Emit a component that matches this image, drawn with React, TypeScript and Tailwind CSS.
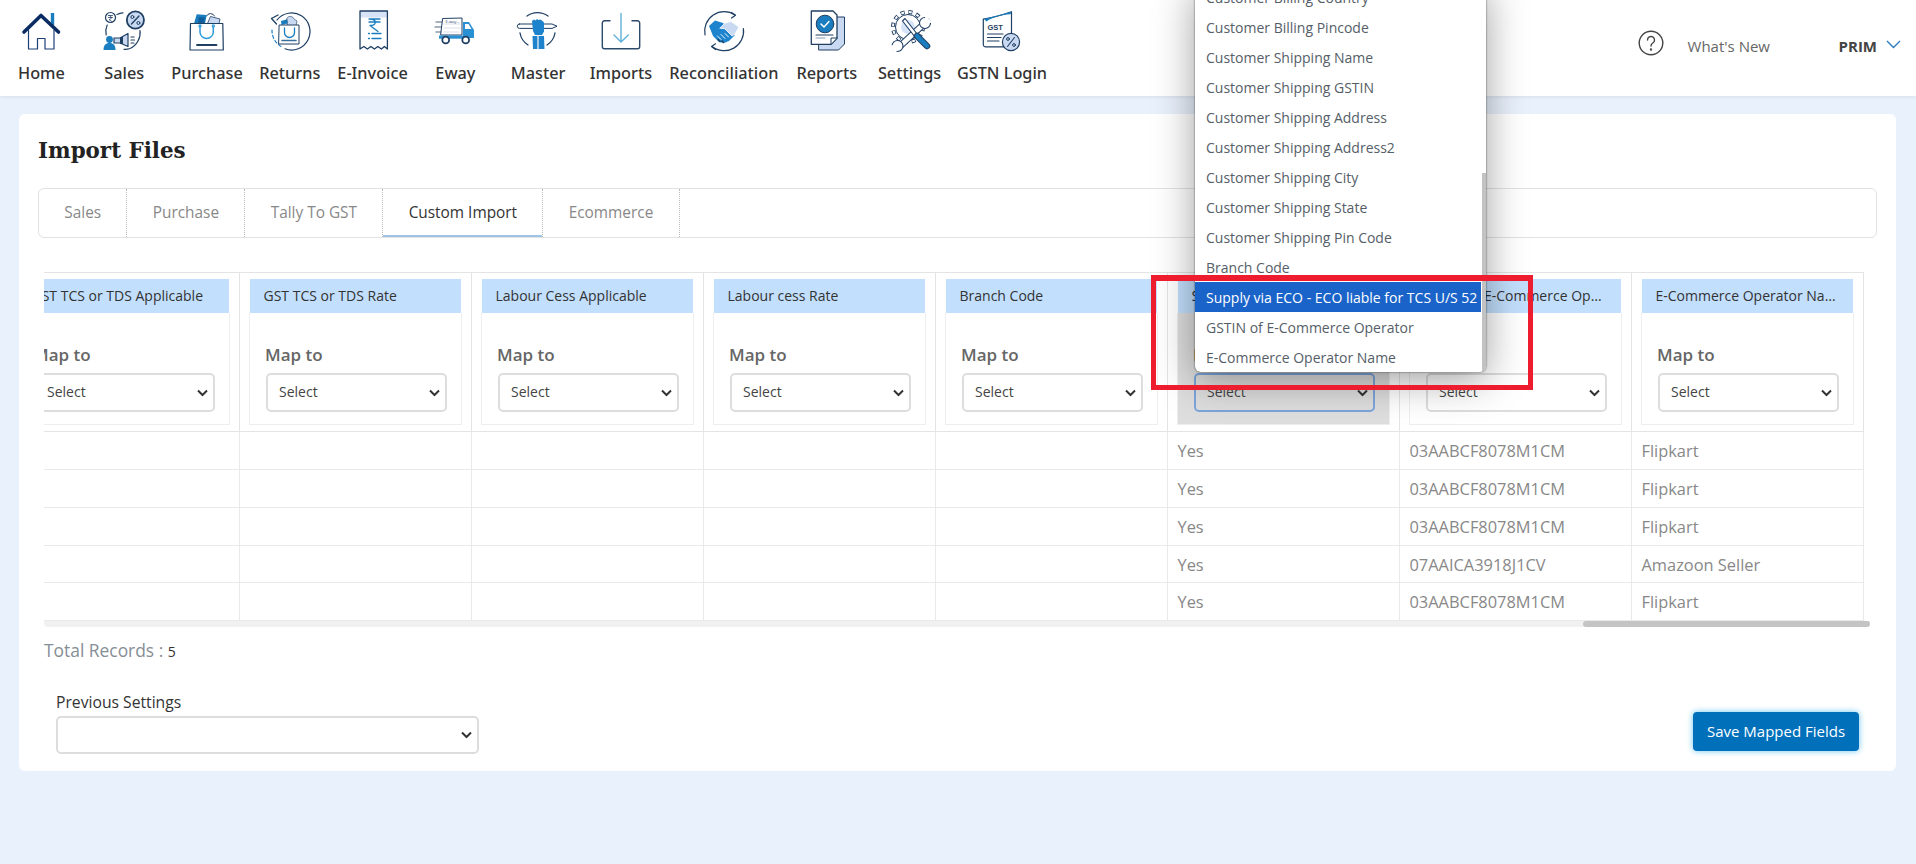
import type { ReactNode } from "react";

const NAVY = "#1f3f63";
const BLUE = "#1a7dc0";
const PALE = "#c9d9f1";

const Icon = ({ children }: { children: ReactNode }) => (
  <svg viewBox="0 0 44 44" className="h-11 w-11" fill="none" stroke={NAVY} strokeWidth="1.2" strokeLinecap="round" strokeLinejoin="round">
    {children}
  </svg>
);

const HomeIcon = () => (
  <Icon>
    <rect x="31.8" y="4" width="3.4" height="12" fill={BLUE} stroke="none" />
    <path d="M9.5 21V40H18.5V29.5H26V40H35V21" stroke="#1d3f78" />
    <path d="M5 23L22 6.5L39.5 23" stroke="#0a2c62" strokeWidth="3.6" />
  </Icon>
);

const SalesIcon = () => (
  <Icon>
    <circle cx="8.5" cy="8.5" r="5" />
    <path d="M6.5 6.500h4M6.500 8.500h4M7 6.500c3 0 3 4 0 4l3 2.200" strokeWidth="0.8" />
    <circle cx="33.400" cy="11" r="8.600" fill={PALE} strokeWidth="1.800" />
    <path d="M29.500 15l7.500-8" strokeWidth="1.300" />
    <circle cx="30.400" cy="8" r="1.500" strokeWidth="1" />
    <circle cx="36.400" cy="14" r="1.500" strokeWidth="1" />
    <path d="M15 5.500c2-1 4-1.500 6-1.600M5.200 16c-1.600 3.500-1.800 6.500-1 10M38 21.500c1 7-3 15-10 18-2 .7-4 1-6 .8" strokeWidth="1.200" />
    <circle cx="7.500" cy="30.500" r="3.400" fill={BLUE} stroke="none" />
    <path d="M1.500 41c0-4.500 2-7 6-7s6 2.500 6 7z" fill={BLUE} stroke="none" />
    <path d="M12 29h6l8-4.500v13l-8-3.500h-6z" fill={PALE} />
    <rect x="18" y="28" width="3" height="7" fill={NAVY} stroke="none" />
    <path d="M29 28h3M29 31h3.500M29 34h3" strokeWidth="1.200" />
  </Icon>
);

const PurchaseIcon = () => (
  <Icon>
    <path d="M21.500 7a4.500 4.500 0 0 1 8 0" strokeWidth="1" />
    <path d="M9 14.500l2.700-9.200 10 .7-1.700 8.500z" fill={BLUE} stroke="none" />
    <path d="M14 8l6 .5-1 6h-6z" fill="#0f5f9c" stroke="none" />
    <path d="M22.500 14.500l3-7L35 10l-1 4.500z" fill={PALE} strokeWidth="0.8" />
    <path d="M5.500 14.500H37.800L38.300 41H5z" fill="white" />
    <path d="M15 18v5.500a6.700 6.700 0 0 0 13.300 0V18" stroke="#2c9bdc" strokeWidth="1.500" />
    <circle cx="15" cy="17" r="1.100" stroke="#2c9bdc" />
    <circle cx="28.300" cy="17" r="1.100" stroke="#2c9bdc" />
    <path d="M12 36h19.500" strokeWidth="1.800" />
  </Icon>
);

const ReturnsIcon = () => (
  <Icon>
    <path d="M9 11A18.500 18.500 0 1 1 17 39.800" />
    <path d="M4 21A18.500 18.500 0 0 0 14 38" stroke={BLUE} strokeDasharray="3 2.500" />
    <path d="M3.500 9.500L10 6M3.500 9.500L8.500 15" strokeWidth="1.300" />
    <path d="M13 12l7-2 1.500 4-8 2z" fill={BLUE} stroke="none" />
    <path d="M19 9a4 4 0 0 1 7 1l3 2-1 5h-8z" fill={PALE} stroke={NAVY} strokeWidth="0.6" />
    <path d="M11.500 16H31V35H11z" fill="white" strokeWidth="1" />
    <path d="M16.500 19v4.500a5 5 0 0 0 10 0V19" stroke={BLUE} strokeWidth="1.300" />
    <path d="M14 31.500H28" strokeWidth="1.600" stroke="#3b6f9c" />
  </Icon>
);

const InvoiceIcon = () => (
  <Icon>
    <rect x="9" y="2" width="27.400" height="6.500" fill="#d7e4f8" stroke="none" />
    <path d="M9 40V2H36.400V40l-3-2.500-3 2.500-3.500-2.500-3.500 2.500-3.500-2.500-3.500 2.500-3.500-2.500z" strokeWidth="1.300" />
    <path d="M18 10h11M18 13h11M19 10c7 0 7 6.500 0 6.500l8 6" stroke={BLUE} strokeWidth="1.300" />
    <path d="M17.500 24.500h1M21 24.500h9M17.500 29.500h1M21 29.500h9" stroke={BLUE} strokeWidth="1.300" />
  </Icon>
);

const EwayIcon = () => (
  <Icon>
    <path d="M3 13h6M2 18h6M3 23h5" strokeWidth="1.400" stroke="#8a99aa" />
    <path d="M10 9.500l19-.5v17H8z" fill="white" strokeWidth="1" />
    <path d="M11 15h16M11 19h16M11 23h15" stroke="#d9e2ee" />
    <text x="12.500" y="14" fontSize="4" fill={NAVY} stroke="none" fontFamily="Open Sans, sans-serif">E-way...</text>
    <path d="M30 13h6l5 8v8H30z" fill="#2a90d4" stroke="none" />
    <path d="M32 15h3.500l3 5H32z" fill="white" stroke="none" />
    <rect x="6" y="26.500" width="26" height="3.200" fill="#2a90d4" stroke="none" />
    <circle cx="12.700" cy="31" r="3.400" fill="white" strokeWidth="1.800" />
    <circle cx="32.700" cy="31" r="3.400" fill="white" strokeWidth="1.800" />
  </Icon>
);

const MasterIcon = () => (
  <Icon>
    <path d="M11 7a18 18 0 0 1 21 0M4 24a18 18 0 0 0 8 12M39 24a18 18 0 0 1-8 12" strokeWidth="1.300" />
    <path d="M3.500 15H36l5 2.200-5 2.200H3.500a2 2 0 0 1 0-4.400z" fill="white" strokeWidth="1" />
    <path d="M16 12l2-1.500 1.500 1 1.500-1.500 1.500 1 1.500-.5 2 1 2 2v9l-2 3.500h-7l-2-4z" fill="#1d83cc" stroke="none" />
    <path d="M16.500 27H28l.5 13H17z" fill="#1d83cc" stroke="none" />
    <path d="M22 27V40" stroke="#cfdff2" strokeWidth="1.500" />
  </Icon>
);

const ImportsIcon = () => (
  <Icon>
    <path d="M11 11.800H5.500a2.200 2.200 0 0 0-2.200 2.200V37.500a2.200 2.200 0 0 0 2.200 2.200H38.500a2.200 2.200 0 0 0 2.200-2.200V14a2.200 2.200 0 0 0-2.200-2.200H33" strokeWidth="1.400" stroke="#2c4a6a" />
    <path d="M22 4.500V33M15 26l7 7 7.300-7" stroke="#5fb1d8" strokeWidth="1.400" />
  </Icon>
);

const ReconIcon = () => (
  <Icon>
    <path d="M3 26A19.500 19.500 0 0 1 33 6" strokeWidth="1.200" />
    <path d="M41.400 19.500A19.500 19.500 0 0 1 10 37.500" strokeWidth="1.200" />
    <path d="M29.500 3.500L33.500 6.200 29.500 9M13.500 34.800L9.500 37.500 13.500 40.500" strokeWidth="1.200" />
    <path d="M7 17L13 11.500 21 14 33 26 30 29 27 32 22 34 17 33 11 27z" fill="#1d83cc" stroke="none" />
    <path d="M18 19L23 14 29 12.500 37 18 33 25 30 27 23 20z" fill={PALE} stroke="white" strokeWidth="0.800" />
    <path d="M15.500 27l3.500 3.500M19 25.500l4 4M23 24.500l3.500 3.500" stroke="white" strokeWidth="0.900" />
    <path d="M16 30.500l2 2M20 32l1.500 1.500" stroke={NAVY} strokeWidth="1.500" />
  </Icon>
);

const ReportsIcon = () => (
  <Icon>
    <path d="M14 8h25.500v27l-6 6H14z" fill={PALE} strokeWidth="1" />
    <path d="M6.300 2H28l4 4v23l-6 6.300H6.300z" fill="white" strokeWidth="1.300" />
    <path d="M26 35.300V29h6z" fill="white" strokeWidth="1" />
    <circle cx="20" cy="15" r="8.800" fill={BLUE} stroke={NAVY} strokeWidth="1" />
    <path d="M16 15l3 3 5-5.500" stroke="white" strokeWidth="1.500" />
    <path d="M11 26h17" strokeWidth="1.200" />
    <path d="M11 29h9" strokeWidth="1" stroke="#8a99aa" />
  </Icon>
);

const SettingsIcon = () => (
  <Icon>
    <circle cx="20" cy="18" r="15" stroke={NAVY} strokeWidth="4" strokeDasharray="4 3.850" strokeLinecap="butt" />
    <circle cx="20" cy="18" r="15" stroke="white" strokeWidth="2" strokeDasharray="2.800 5.050" strokeDashoffset="-0.600" strokeLinecap="butt" />
    <circle cx="20" cy="18" r="12.500" fill="white" stroke={NAVY} strokeWidth="1" />
    <circle cx="20" cy="18" r="7" fill="#d7e4f8" stroke="none" />
    <path d="M11 38L37 14" stroke={NAVY} strokeWidth="7" strokeLinecap="butt" />
    <path d="M11 38L37 14" stroke="white" strokeWidth="5" strokeLinecap="butt" />
    <circle cx="37" cy="14" r="5.500" fill="white" strokeWidth="1.100" />
    <circle cx="9.500" cy="37" r="5.500" fill="white" strokeWidth="1.100" />
    <path d="M38 7.500L37 14l6-1z" fill="white" stroke="white" strokeWidth="1.500" />
    <path d="M2 37l7.500 0 -2 6z" fill="white" stroke="white" strokeWidth="1.500" />
    <path d="M14.500 12l2.500-2.500 12.500 16-2.500 2.500z" fill="white" strokeWidth="1.100" />
    <path d="M29 27L39 37" stroke={NAVY} strokeWidth="6.500" />
    <path d="M29 27L39 37" stroke={BLUE} strokeWidth="4.500" />
  </Icon>
);

const GstnIcon = () => (
  <Icon>
    <path d="M3.300 36V10C12 9 22 6 31.500 2.700V26L27 37.800H5.500a2.200 2.200 0 0 1-2.200-1.800z" fill="white" strokeWidth="1.200" />
    <path d="M4 10l27.500-7.300-1 2.500C22 6 13 7.500 6.500 12.500z" fill={BLUE} stroke="none" />
    <text x="7.500" y="21" fontSize="7.500" fontWeight="700" fill={NAVY} stroke="none" fontFamily="Liberation Sans, sans-serif">GST</text>
    <path d="M7.500 25H23M7.500 28.500H21M7.500 32H19" strokeWidth="1.200" />
    <circle cx="31" cy="33" r="8.600" fill={PALE} strokeWidth="1.200" />
    <path d="M27.500 37.500l7-9" strokeWidth="1.100" />
    <circle cx="28" cy="30" r="1.400" strokeWidth="1" />
    <circle cx="34" cy="36" r="1.400" strokeWidth="1" />
  </Icon>
);

const navItems = [
  { label: "Home", icon: <HomeIcon />, w: "w-[82.8px]" },
  { label: "Sales", icon: <SalesIcon />, w: "w-[82.8px]" },
  { label: "Purchase", icon: <PurchaseIcon />, w: "w-[82.8px]" },
  { label: "Returns", icon: <ReturnsIcon />, w: "w-[82.8px]" },
  { label: "E-Invoice", icon: <InvoiceIcon />, w: "w-[82.8px]" },
  { label: "Eway", icon: <EwayIcon />, w: "w-[82.8px]" },
  { label: "Master", icon: <MasterIcon />, w: "w-[82.8px]" },
  { label: "Imports", icon: <ImportsIcon />, w: "w-[82.8px]" },
  { label: "Reconciliation", icon: <ReconIcon />, w: "w-[123px]" },
  { label: "Reports", icon: <ReportsIcon />, w: "w-[82.8px]" },
  { label: "Settings", icon: <SettingsIcon />, w: "w-[82.8px]" },
  { label: "GSTN Login", icon: <GstnIcon />, w: "w-[102px]" },
];

const tabs = ["Sales", "Purchase", "Tally To GST", "Custom Import", "Ecommerce"];

const columns = [
  "GST TCS or TDS Applicable",
  "GST TCS or TDS Rate",
  "Labour Cess Applicable",
  "Labour cess Rate",
  "Branch Code",
  "Supply via ECO - ECO liable for TCS U/S 52",
  "GSTIN of E-Commerce Operator",
  "E-Commerce Operator Name",
];

const rows = [
  { gstin: "03AABCF8078M1CM", name: "Flipkart", h: "h-[38px]" },
  { gstin: "03AABCF8078M1CM", name: "Flipkart", h: "h-[38px]" },
  { gstin: "03AABCF8078M1CM", name: "Flipkart", h: "h-[38px]" },
  { gstin: "07AAICA3918J1CV", name: "Amazoon Seller", h: "h-[37px]" },
  { gstin: "03AABCF8078M1CM", name: "Flipkart", h: "h-[38px]" },
];

const options = [
  "Customer Billing Country",
  "Customer Billing Pincode",
  "Customer Shipping Name",
  "Customer Shipping GSTIN",
  "Customer Shipping Address",
  "Customer Shipping Address2",
  "Customer Shipping City",
  "Customer Shipping State",
  "Customer Shipping Pin Code",
  "Branch Code",
  "Supply via ECO - ECO liable for TCS U/S 52",
  "GSTIN of E-Commerce Operator",
  "E-Commerce Operator Name",
];

const SelectBox = ({ className, label }: { className: string; label?: string }) => (
  <div className="relative">
    <select
      defaultValue={label}
      className={`block appearance-none rounded-[5px] border-2 pl-[11px] text-[14px] text-[#444] ${className}`}
    >
      {label ? <option>{label}</option> : null}
    </select>
    <svg viewBox="0 0 11 7" className="pointer-events-none absolute top-1/2 right-[7px] h-[7px] w-[11px] -translate-y-1/2" fill="none" stroke="#333" strokeWidth="2">
      <path d="M1 1l4.500 4.500L10 1" />
    </svg>
  </div>
);

const ColumnHead = ({ title, open }: { title: string; open: boolean }) => (
  <th className="w-[232px] border-t border-r border-b border-[#e4e4e4] px-[9px] pt-[6px] pb-[6px] text-left font-normal">
    <div className="mx-px flex h-[34px] items-center bg-[#c2dffd] pr-[17px] pb-[2px] pl-[13.5px] text-[14px] font-medium text-[#333]">
      <span className="truncate">{title}</span>
    </div>
    <div className={`h-[112px] border-x border-b border-[#eeeeee] pt-[30px] pl-4 ${open ? "bg-[#dedede]" : ""}`}>
      <div className="-ml-px w-[181px] text-[17px] leading-6 font-semibold text-[#666]">Map to</div>
      <div className="mt-[6px] w-[181px]">
        <SelectBox
          label="Select"
          className={`h-[39px] w-[181px] pb-[2px] ${open ? "border-[#7ba6dc] bg-transparent" : "border-[#dddddd] bg-white"}`}
        />
      </div>
    </div>
  </th>
);

export default function App() {
  return (
    <div className="relative flex h-[864px] flex-col overflow-hidden bg-[#e9f1fc] font-['Open_Sans',sans-serif]">
      <header className="flex h-24 shrink-0 bg-white pt-[9px] shadow-[0_1px_4px_rgba(0,0,0,0.08)]">
        <nav className="flex">
          {navItems.map((item) => (
            <div key={item.label} className={`flex flex-col items-center ${item.w}`}>
              {item.icon}
              <span className="mt-[9px] font-['Noto_Sans',sans-serif] text-[16.3px] leading-[22px] font-medium whitespace-nowrap text-[#333]">
                {item.label}
              </span>
            </div>
          ))}
        </nav>
        <div className="ml-auto flex items-start pt-[21px] pr-[15px]">
          <svg viewBox="0 0 26 26" className="h-[26px] w-[26px]" fill="none" stroke="#444" strokeWidth="1.400" strokeLinecap="round">
            <circle cx="13" cy="13" r="11.800" />
            <path d="M9.500 10a3.500 3.500 0 1 1 5.300 3c-1.300.8-1.800 1.400-1.800 3" />
            <circle cx="13" cy="19.500" r="0.500" />
          </svg>
          <span className="mt-[4px] ml-[24px] w-[151px] text-[15px] leading-6 text-[#666]">What's New</span>
          <span className="mt-[4px] text-[15px] leading-6 font-bold text-[#444]">PRIM</span>
          <svg viewBox="0 0 15 9" className="mt-[10px] ml-[9px] h-[9px] w-[15px]" fill="none" stroke="#2a7bbf" strokeWidth="1.400">
            <path d="M1 1l6.500 6.500L14 1" />
          </svg>
        </div>
      </header>

      <main className="mt-[18px] mr-[20px] ml-[19px] h-[657px] rounded-md bg-white px-[19px] pt-[23px]">
        <h1 className="font-['DejaVu_Serif',serif] text-[21.4px] leading-7 font-bold text-[#222]">Import Files</h1>

        <div className="mt-[23px] flex h-[50px] rounded-md border border-[#e2e2e2]">
          {tabs.map((tab) => (
            <div
              key={tab}
              className={`flex items-center border-r border-dotted border-[#bbbbbb] px-[25.3px] text-[15.4px] ${tab === "Custom Import" ? "font-medium text-[#333] shadow-[inset_0_-2px_0_#9dc3e6]" : "text-[#888]"}`}
            >
              {tab}
            </div>
          ))}
        </div>

        <div className="mt-[34px] ml-[6px] w-[1826px]">
          <div className="overflow-hidden">
            <table className="-ml-[36px] w-[1856px] table-fixed border-separate border-spacing-0">
              <thead>
                <tr>
                  {columns.map((title, i) => (
                    <ColumnHead key={title} title={title} open={i === 5} />
                  ))}
                </tr>
              </thead>
              <tbody>
                {rows.map((row, r) => (
                  <tr key={r} className={row.h}>
                    {columns.map((title, i) => (
                      <td key={title} className="border-r border-b border-[#e9e9e9] pt-[2px] pl-[9.5px] text-[16.4px] text-[#888]">
                        {i === 5 ? "Yes" : i === 6 ? row.gstin : i === 7 ? row.name : ""}
                      </td>
                    ))}
                  </tr>
                ))}
              </tbody>
            </table>
          </div>
          <div className="flex h-[6px] justify-end rounded-b-sm bg-[#f1f1f1]">
            <div className="h-[6px] w-[287px] rounded-sm bg-[#c4c4c4]" />
          </div>
        </div>

        <div className="mt-[11px] ml-[6px] text-[17.4px] leading-6 text-[#868e96]">
          Total Records : <span className="text-[14px] text-[#333]">5</span>
        </div>

        <div className="mt-[28px] flex items-end justify-between pr-[18px] pl-[18px]">
          <div>
            <label className="block text-[15.7px] leading-5 font-medium text-[#333]">Previous Settings</label>
            <div className="mt-1">
              <SelectBox className="h-[38px] w-[423px] border-[#dddddd] bg-white" />
            </div>
          </div>
          <button className="mb-[3px] h-[39px] w-[166px] rounded bg-[#0070bb] text-[15px] font-medium text-white shadow-[0_0_6px_rgba(0,160,230,0.6)]">
            Save Mapped Fields
          </button>
        </div>
      </main>

      <div className="absolute top-[-18px] left-[1195px] w-[291px] overflow-hidden rounded-b-md bg-white pr-[5px] shadow-[0_0_2px_rgba(0,0,0,0.7),0_8px_40px_rgba(0,0,0,0.38)]">
        {options.map((option) => (
          <div
            key={option}
            className={`flex h-[30px] items-center pl-[11px] text-[14px] whitespace-nowrap ${option.startsWith("Supply") ? "bg-[#1a63c9] text-white" : "text-[#555e68]"}`}
          >
            {option}
          </div>
        ))}
        <div className="absolute right-0 bottom-0 h-[199px] w-1 bg-[#c2c2c2]" />
      </div>

      <div className="pointer-events-none absolute top-[275px] left-[1151px] h-[115px] w-[382px] border-[5px] border-t-[6px] border-[#ed1c2e]" />
    </div>
  );
}
